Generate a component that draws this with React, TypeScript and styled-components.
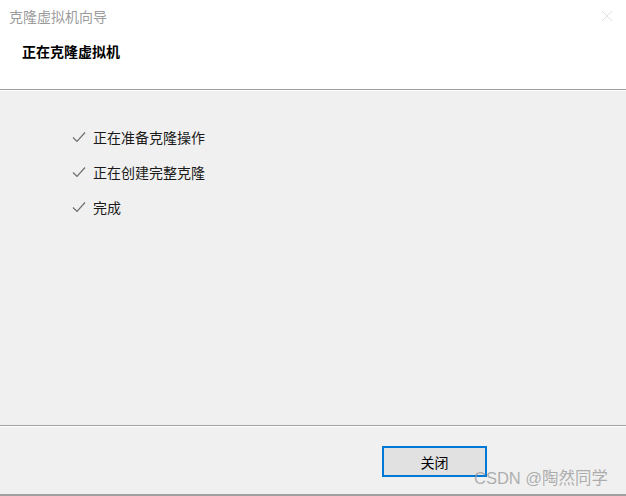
import React from 'react';
import styled, { createGlobalStyle } from 'styled-components';

const GlobalStyle = createGlobalStyle`
  html, body {
    margin: 0;
    padding: 0;
    background: #f0f0f0;
  }
  body {
    font-family: "Noto Sans CJK SC", "Noto Sans", sans-serif;
  }
`;

const Window = styled.div`
  position: relative;
  width: 626px;
  height: 496px;
  display: flex;
  flex-direction: column;
  background: #f0f0f0;
  overflow: hidden;
`;

const Header = styled.div`
  height: 90px;
  box-sizing: border-box;
  background: #ffffff;
  border-bottom: 1px solid #a0a0a0;
  display: flex;
  flex-direction: column;
`;

const TitleBar = styled.div`
  height: 32px;
  display: flex;
  align-items: center;
  justify-content: space-between;
  padding: 0 10px 0 9px;
`;

const Title = styled.span`
  font-size: 14px;
  color: #9b9b9b;
  line-height: 1;
`;

const CloseGlyph = styled.svg`
  width: 12px;
  height: 12px;
  margin-right: 3px;
`;

const Heading = styled.div`
  padding: 10px 0 0 22px;
  font-size: 14px;
  font-weight: bold;
  color: #000;
  line-height: 18px;
`;

const Body = styled.div`
  flex: 1;
  padding: 28px 0 0 72px;
  display: flex;
  flex-direction: column;
  border-top: 1px solid #ffffff;
  border-bottom: 1px solid #a0a0a0;
`;

const Step = styled.div`
  height: 35px;
  display: flex;
  align-items: center;
  gap: 7px;
  font-size: 14px;
  color: #1a1a1a;
`;

const Check = styled.svg`
  width: 14px;
  height: 12px;
  flex: none;
`;

const Footer = styled.div`
  height: 70px;
  box-sizing: border-box;
  border-top: 1px solid #ffffff;
  border-bottom: 2px solid #a0a0a0;
  display: flex;
  justify-content: flex-end;
  align-items: flex-start;
  padding: 19px 139px 0 0;
`;

const Button = styled.button`
  width: 105px;
  height: 31px;
  box-sizing: border-box;
  border: 2px solid #0078d7;
  background: #e1e1e1;
  font-family: inherit;
  font-size: 14px;
  color: #000;
  padding: 0;
`;

const Watermark = styled.div`
  position: absolute;
  left: 474px;
  top: 468px;
  font-family: "Liberation Sans", "Noto Sans CJK SC", sans-serif;
  font-size: 16.5px;
  line-height: 20px;
  color: rgba(150, 150, 150, 0.75);
  white-space: nowrap;
`;

const steps = ['正在准备克隆操作', '正在创建完整克隆', '完成'];

const App: React.FC = () => {
  return (
    <Window>
      <GlobalStyle />
      <Header>
        <TitleBar>
          <Title>克隆虚拟机向导</Title>
          <CloseGlyph viewBox="0 0 12 12">
            <path d="M1 1 L11 11 M11 1 L1 11" stroke="#e0e0e0" strokeWidth="1" fill="none" />
          </CloseGlyph>
        </TitleBar>
        <Heading>正在克隆虚拟机</Heading>
      </Header>
      <Body>
        {steps.map((s) => (
          <Step key={s}>
            <Check viewBox="0 0 14 12">
              <path d="M1 6.5 L5 10.5 L13 1.5" stroke="#6d6d6d" strokeWidth="1.2" fill="none" />
            </Check>
            {s}
          </Step>
        ))}
      </Body>
      <Footer>
        <Button>关闭</Button>
      </Footer>
      <Watermark>CSDN @陶然同学</Watermark>
    </Window>
  );
};

export default App;
